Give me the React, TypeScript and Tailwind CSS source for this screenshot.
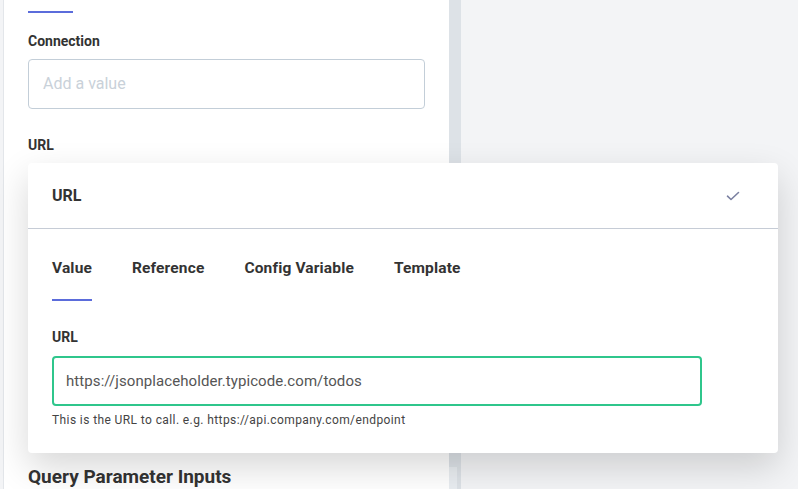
import React from "react";

const font = { fontFamily: "Roboto, 'Liberation Sans', sans-serif" };

const CheckIcon: React.FC = () => (
    <svg width="14" height="10" viewBox="0 0 14 10" fill="none">
        <path d="M1.5 5.2 L5 8.5 L12.5 1.5" stroke="#7b80a1" strokeWidth="1.6" strokeLinecap="round" strokeLinejoin="round" />
    </svg>
);

const tabs = ["Value", "Reference", "Config Variable", "Template"];

const UrlPopover: React.FC = () => (
    <div className="absolute left-[28px] top-[163px] w-[750px] h-[290px] bg-white rounded-[4px] shadow-[0_14px_36px_rgba(0,0,0,0.16)]">
        <div className="h-[66px] flex items-center justify-between pl-6 pr-[38px] border-b border-[#c6ccd6]">
            <span className="mt-[1px] text-[16px] font-bold text-[#333]">URL</span>
            <CheckIcon />
        </div>
        <div className="px-6">
            <div className="flex gap-10">
                {tabs.map((tab, i) => (
                    <div key={tab} className="flex flex-col pt-[29px]">
                        <span className="text-[15.5px] leading-[20px] font-bold text-[#333] tracking-[0.15px]">{tab}</span>
                        <div className={i === 0 ? "mt-[21px] h-[2px] bg-[#5b6cdb]" : "mt-[21px] h-[2px]"} />
                    </div>
                ))}
            </div>
            <div className="mt-[28px] text-[14px] leading-[16px] font-bold text-[#333]">URL</div>
            <div className="mt-[11px] w-[650px] h-[50px] border-2 border-[#2fc68c] rounded-[4px] flex items-center pl-3 text-[15px] text-[#555] tracking-[0.08px]">
                https://jsonplaceholder.typicode.com/todos
            </div>
            <div className="mt-[7px] text-[12px] leading-[14px] text-[#444] tracking-[0.4px]">
                This is the URL to call. e.g. https://api.company.com/endpoint
            </div>
        </div>
    </div>
);

export default function App() {
    return (
        <div className="relative w-[798px] h-[489px] overflow-hidden bg-[#f3f4f6] flex" style={font}>
            <div className="ml-[3px] w-[446px] h-full bg-white border-l border-[#e3e6ea] pl-6">
                <div className="mt-[11px] w-[45px] h-[2px] bg-[#5b6cdb]" />
                <div className="mt-[20px] text-[14px] leading-[16px] font-bold text-[#333]">Connection</div>
                <div className="mt-[10px] w-[397px] h-[50px] border border-[#c3ced8] rounded-[4px] flex items-center px-[14px] text-[16px] text-[#c9d1d9]">
                    Add a value
                </div>
                <div className="mt-[28px] text-[14px] leading-[16px] font-bold text-[#333]">URL</div>
                <div className="mt-[312px] text-[19px] leading-[24px] font-bold text-[#333]">Query Parameter Inputs</div>
            </div>
            <div className="w-[12px] h-full bg-[#dde2e7] flex flex-col justify-end">
                <div className="w-[8px] h-[22px] bg-[#e9edf1]" />
            </div>
            <div className="flex-1" />
            <UrlPopover />
        </div>
    );
}
